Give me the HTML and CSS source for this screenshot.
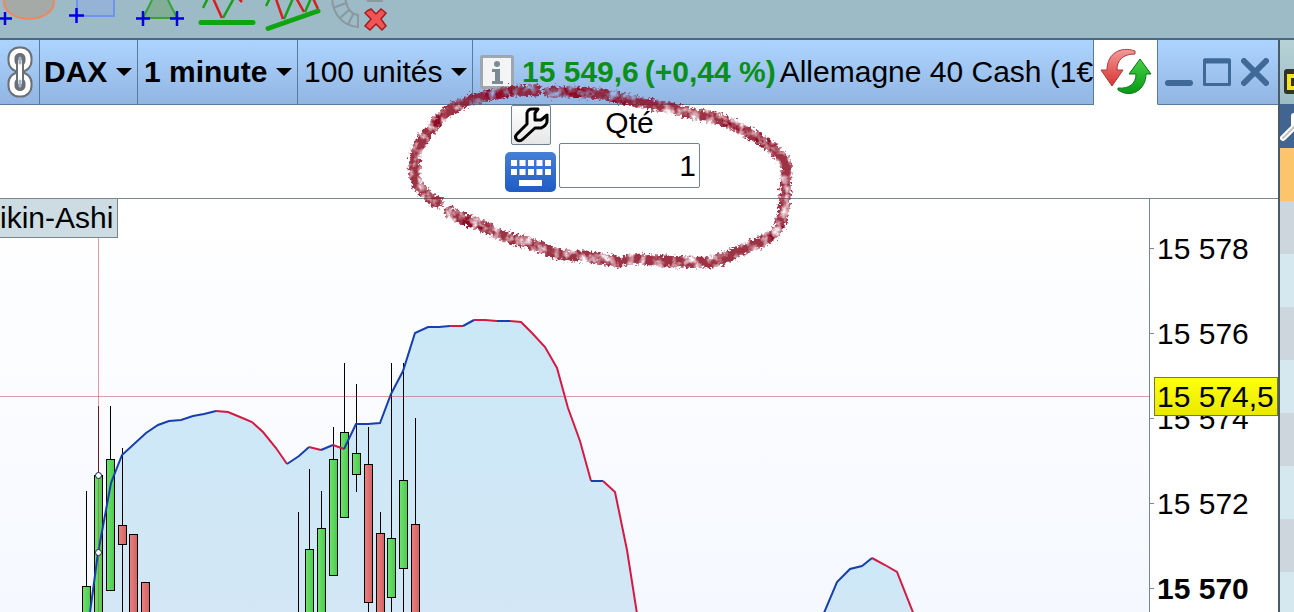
FILE: index.html
```html
<!DOCTYPE html>
<html lang="fr">
<head>
    <meta charset="UTF-8">
    <meta name="viewport" content="width=device-width, initial-scale=1.0">
    <title>DAX - 1 minute</title>
    <link rel="stylesheet" href="styles.css">
</head>
<body>
<div class="tools">
    <button class="tool" aria-label="Ellipse">
        <svg viewBox="0 0 58 38">
            <ellipse cx="29" cy="2" rx="25" ry="17" fill="#a6aaa6" stroke="#f0865c" stroke-width="2"/>
            <path d="M-2 18.500H12M5 12V25" stroke="#0000e0" stroke-width="2.500"/>
        </svg>
    </button>
    <button class="tool" aria-label="Rectangle">
        <svg viewBox="66 0 58 38">
            <rect x="77" y="-10" width="37" height="26" fill="#94b3d6" stroke="#6f94ee" stroke-width="2"/>
            <path d="M69 15.500H84M76.500 8V23" stroke="#0000e0" stroke-width="2.500"/>
        </svg>
    </button>
    <button class="tool" aria-label="Triangle">
        <svg viewBox="132 0 58 38">
            <path d="M143 18L160 -16L177 18Z" fill="#82ae97" stroke="#35a23a" stroke-width="2"/>
            <path d="M136 18.500H150M143 11V26M170 18.500H184M177 11V26" stroke="#0000e0" stroke-width="2.500"/>
        </svg>
    </button>
    <button class="tool" aria-label="Support horizontal">
        <svg viewBox="198 0 58 38" fill="none" stroke-width="2.500">
            <path d="M203 8L209 -4M223 18L234 -2" stroke="#16a016"/>
            <path d="M212 -4L222 18M237 -3L242 2" stroke="#d81e1e"/>
            <path d="M201 22.500H253" stroke="#10a510" stroke-width="5" stroke-linecap="round"/>
        </svg>
    </button>
    <button class="tool" aria-label="Support oblique">
        <svg viewBox="264 0 58 38" fill="none" stroke-width="2.500">
            <path d="M266 6L271 -4M284 19L294 -4M305 12L312 -4" stroke="#16a016"/>
            <path d="M275 -4L283 19M295 -4L304 12M312 -4L318 9" stroke="#d81e1e"/>
            <path d="M268 28.500L318 11" stroke="#10a510" stroke-width="5" stroke-linecap="round"/>
        </svg>
    </button>
    <button class="tool" aria-label="Supprimer les objets">
        <svg viewBox="330 0 58 38" fill="none" stroke="#8b989d" stroke-width="2">
            <path d="M332 -4C332 14 343 26 358 27V15C351 14 346 9 345 -4M333 8L346 3M339 19L349 10M348 25L353 14M367 1H383"/>
            <path d="M367 11L371 9L376 14L381 9L386 13L381 19L386 26L382 30L376 24L370 30L365 26L371 19L365 13Z" fill="#f05555" stroke="#a51c22" stroke-width="1.500"/>
        </svg>
    </button>
</div>

<div class="workspace">
    <main class="window">
        <header class="titlebar">
            <button class="cell link" aria-label="Lier les fenêtres">
                <svg width="26" height="52" viewBox="0 0 26 52" fill="none">
                    <rect x="5" y="5" width="16" height="17" rx="7" stroke="#6b7077" stroke-width="9"/>
                    <rect x="5" y="5" width="16" height="17" rx="7" stroke="#fff" stroke-width="5"/>
                    <rect x="5" y="30" width="16" height="17" rx="7" stroke="#6b7077" stroke-width="9"/>
                    <rect x="5" y="30" width="16" height="17" rx="7" stroke="#fff" stroke-width="5"/>
                    <path d="M13 11V41" stroke="#6b7077" stroke-width="8" stroke-linecap="round"/>
                    <path d="M13 14V38" stroke="#fff" stroke-width="4"/>
                    <path d="M13 12V17M13 35V40" stroke="#a4b4c8" stroke-width="3" stroke-linecap="round"/>
                </svg>
            </button>
            <div class="cell pick">
                <select class="bold" aria-label="Valeur"><option>DAX</option></select>
                <svg class="caret" viewBox="0 0 16 8"><path d="M0 0H16L8 8Z"/></svg>
            </div>
            <div class="cell pick">
                <select class="bold" aria-label="Unité de temps"><option>1 minute</option></select>
                <svg class="caret" viewBox="0 0 16 8"><path d="M0 0H16L8 8Z"/></svg>
            </div>
            <div class="cell pick">
                <select aria-label="Nombre d'unités"><option>100 unités</option></select>
                <svg class="caret" viewBox="0 0 16 8"><path d="M0 0H16L8 8Z"/></svg>
            </div>
            <div class="cell quote">
                <button class="info" aria-label="Informations">
                    <svg width="34" height="34" viewBox="0 0 34 34">
                        <rect x="1.500" y="1.500" width="31" height="31" rx="1" fill="#f4f4f4" stroke="#9da7ad" stroke-width="3"/>
                        <circle cx="17" cy="9" r="3" fill="#7b8b94"/>
                        <path d="M12 14H20V26H23V29H12V26H15V17H12Z" fill="#7b8b94"/>
                    </svg>
                </button>
                <span class="price">15 549,6</span>
                <span class="change">(+0,44 %)</span>
                <span class="name">Allemagne 40 Cash (1€</span>
            </div>
            <button class="cell refresh" aria-label="Actualiser">
                <svg width="52" height="48" viewBox="0 0 52 48">
                    <defs>
                        <linearGradient id="red" x2="0" y2="1"><stop stop-color="#f39a9a"/><stop offset="1" stop-color="#d8322f"/></linearGradient>
                        <linearGradient id="green" x2="0" y2="1"><stop stop-color="#45d045"/><stop offset="1" stop-color="#079a14"/></linearGradient>
                    </defs>
                    <path d="M35 3C21 -2 7 5 7 22H1L12 38L23 22H17C17 12 23 6 35 6Z" fill="url(#red)" stroke="#a83b3b"/>
                    <path d="M18 42C31 51 46 42 46 26H51L40 11L29 26H36C36 36 29 41 18 40Z" fill="url(#green)" stroke="#12711d"/>
                </svg>
            </button>
            <div class="cell controls">
                <button aria-label="Réduire"><svg viewBox="0 0 28 28"><path d="M3 25H25" stroke-width="6" stroke-linecap="round"/></svg></button>
                <button aria-label="Agrandir"><svg viewBox="0 0 28 28"><path d="M1.500 2H26.500V26.500H1.500Z" stroke-width="3" stroke-linejoin="round"/><path d="M1 3H27" stroke-width="5"/></svg></button>
                <button aria-label="Fermer"><svg viewBox="0 0 28 28"><path d="M3 3L25 25M25 3L3 25" stroke-width="6" stroke-linecap="round"/></svg></button>
            </div>
        </header>

        <section class="order">
            <div class="order-tools">
                <button class="settings" aria-label="Réglages">
                    <svg width="38" height="38" viewBox="0 0 38 38" fill="none" stroke="#000" stroke-width="3" stroke-linejoin="round">
                        <path d="M15 7Q16 3 20 3H26L23 7V14H29L35 9V16Q34 20 29 22H23L11 33Q8 36 5 34Q2 31 5 28L15 18Z"/>
                    </svg>
                </button>
                <button class="keyboard" aria-label="Clavier">
                    <svg width="51" height="40" viewBox="0 0 51 40">
                        <path d="M9 8V24M17.500 8V24M26 8V24M34.500 8V24M43 8V24" stroke="#fff" stroke-width="6" stroke-dasharray="6 3"/>
                        <rect x="14" y="28" width="23" height="6" fill="#fff"/>
                    </svg>
                </button>
            </div>
            <div class="qty">
                <label for="qty">Qté</label>
                <input id="qty" type="text" value="1">
            </div>
        </section>

        <section class="chart">
            <div class="plot">
                <span class="indicator">ikin-Ashi</span>
                <svg class="curves" viewBox="0 199 1149 413" preserveAspectRatio="xMinYMin slice">
                    <defs>
                        <linearGradient id="area" x2="0" y2="1"><stop stop-color="#cbe8f7"/><stop offset="1" stop-color="#d3e7f6"/></linearGradient>
                        <linearGradient id="up"><stop stop-color="#6fe36f"/><stop offset="1" stop-color="#4ccb4c"/></linearGradient>
                        <linearGradient id="down"><stop stop-color="#ed8080"/><stop offset="1" stop-color="#cf6464"/></linearGradient>
                    </defs>
                </svg>
            </div>
            <div class="axis">
                <ol>
                    <li>15 578</li>
                    <li>15 576</li>
                    <li>15 574</li>
                    <li>15 572</li>
                    <li class="bold">15 570</li>
                </ol>
                <span class="tag">15 574,5</span>
            </div>
        </section>
    </main>

    <aside class="side">
        <div class="side-head">
            <svg width="14" height="64" viewBox="0 0 14 64"><rect x="4" y="29" width="30" height="25" rx="3" fill="#33332c"/><path d="M16 36H9V48H16" fill="none" stroke="#f7e51c" stroke-width="4"/></svg>
        </div>
        <div class="side-tool">
            <svg width="14" height="44" viewBox="0 0 14 44" fill="none" stroke-linecap="round"><path d="M3 34L14 23M14 12V22" stroke="#fff" stroke-width="6"/><path d="M3 34L15 22" stroke="#c5c5c5" stroke-width="2"/></svg>
        </div>
        <div class="side-current"></div>
        <div class="side-rows"></div>
    </aside>
</div>

<svg class="marker" width="400" height="200" viewBox="400 80 400 200" fill="none" stroke-linecap="round" aria-hidden="true">
    <defs>
        <filter id="chalk" x="-10%" y="-10%" width="120%" height="120%">
            <feTurbulence type="fractalNoise" baseFrequency="0.35" numOctaves="2" seed="4" result="noise"/>
            <feDisplacementMap in="SourceGraphic" in2="noise" scale="9" xChannelSelector="R" yChannelSelector="G" result="rough"/>
            <feTurbulence type="fractalNoise" baseFrequency="0.11" numOctaves="3" seed="9"/>
            <feColorMatrix values="0 0 0 0 0  0 0 0 0 0  0 0 0 0 0  0 0 0 2.6 -0.5" result="grain"/>
            <feComposite in="rough" in2="grain" operator="in"/>
            <feGaussianBlur stdDeviation="0.5"/>
        </filter>
    </defs>
    <g filter="url(#chalk)" stroke="#8d0825">
        <path stroke-width="11" stroke-opacity=".85" d="M536 90C518 91 506 91 496 94C480 96 465 102 453 108C444 113 436 122 430 131C421 140 415 148 415 158C413 172 415 184 422 190C428 195 430 201 438 202M449 212C460 219 475 222 487 228C499 236 511 239 523 241C532 243 541 248 550 251C562 257 574 256 585 256C596 257 607 261 618 262M628 260C645 257 656 262 670 261C684 263 698 262 712 262C724 259 736 252 748 247C760 242 770 239 776 232C783 222 784 210 785 197C785 186 786 175 787 164C782 158 778 152 771 147C759 138 744 130 729 123C719 117 708 116 699 115C685 112 672 108 658 106C643 103 630 100 616 97C594 91 570 92 549 92"/>
        <path stroke-width="9" d="M489 94L508 93M566 93L588 94M612 98L624 100M728 123L738 127M758 139L768 145M435 122L441 118M773 234L779 229M785 193V185M468 222L480 226"/>
    </g>
</svg>

<script>
const svg = document.querySelector(".curves");

function add(tag, attrs) {
    const el = document.createElementNS("http://www.w3.org/2000/svg", tag);
    for (const key in attrs) el.setAttribute(key, attrs[key]);
    svg.appendChild(el);
}

// b: hausse, r: baisse, chaque tronçon repart du dernier point
const curves = [
    [
        ["b", "89,620 98,553 111,483 122,455 146,433 158,425 169,421 181,420 193,416 204,414 216,411"],
        ["r", "228,412 240,417 252,422 263,432 276,448 287,464"],
        ["b", "299,456 309,447"], ["r", "321,450"], ["b", "333,445"], ["r", "344,449"],
        ["b", "356,424 368,424 380,423 391,394 403,371 415,333 428,327 439,327 450,326"],
        ["r", "463,326"], ["b", "474,320"], ["r", "485,320 497,321"], ["b", "510,321"],
        ["r", "521,322 532,333 545,347 557,368 568,408 580,441 591,481"],
        ["b", "603,481"], ["r", "615,492 627,550 638,620"]
    ],
    [
        ["b", "821,620 837,582 850,569 862,566 872,558"],
        ["r", "885,565 897,572 916,620"]
    ]
];

// x, haut de mèche, haut du corps, bas du corps, bas de mèche, sens
const candles = [
    [86, 491, 586, 630, 630, "up"],
    [98, 406, 475, 630, 630, "up"],
    [110, 406, 459, 590, 590, "up"],
    [122, 448, 525, 544, 630, "down"],
    [133, 534, 534, 630, 630, "down"],
    [145, 582, 582, 630, 630, "down"],
    [298, 512, 630, 630, 630, "up"],
    [309, 469, 549, 630, 630, "up"],
    [321, 491, 528, 630, 630, "up"],
    [333, 427, 459, 575, 575, "up"],
    [344, 363, 432, 517, 517, "up"],
    [356, 384, 453, 474, 492, "up"],
    [368, 427, 464, 602, 630, "down"],
    [380, 512, 533, 630, 630, "down"],
    [391, 363, 538, 597, 630, "up"],
    [403, 363, 480, 568, 630, "up"],
    [415, 418, 524, 630, 630, "down"]
];

curves.forEach(curve => {
    add("polygon", {points: curve.map(part => part[1]).join(" "), fill: "url(#area)"});
});

candles.forEach(([x, high, top, bottom, low, way]) => {
    add("path", {d: `M${x + .5} ${high}V${low}`, stroke: "#000"});
    add("rect", {x: x - 3.5, y: top + .5, width: 8, height: bottom - top, fill: `url(#${way})`, stroke: "#000"});
});

curves.forEach(curve => {
    let last = "";
    curve.forEach(([color, points]) => {
        add("polyline", {points: last + " " + points, fill: "none", stroke: color === "b" ? "#173fae" : "#d41a43", "stroke-width": 2});
        last = points.split(" ").pop();
    });
});

// curseur
add("path", {d: "M0 396.5H4000M98.5 199V612", stroke: "#c43c4c", "stroke-opacity": .5});
[475, 552].forEach(y => add("circle", {cx: 98.5, cy: y + .5, r: 3, fill: "#fff", stroke: "#124"}));
</script>
</body>
</html>
```
FILE: styles.css
```css
* {
    box-sizing: border-box;
}

body {
    margin: 0;
    height: 100vh;
    display: flex;
    flex-direction: column;
    overflow: hidden;
    background: #fff;
    color: #000;
    font: 30px/36px "Liberation Sans", Arial, sans-serif;
}

button,
select,
input {
    margin: 0;
    padding: 0;
    border: 0;
    background: none;
    color: inherit;
    font: inherit;
}

svg {
    display: block;
}

.bold {
    font-weight: bold;
}

/* barre d'outils */
.tools {
    flex: none;
    display: flex;
    gap: 8px;
    height: 40px;
    background: #9cbbc7;
    border-bottom: 2px solid #47697f;
    overflow: hidden;
}

.tool {
    flex: none;
    width: 58px;
    height: 38px;
}

.workspace {
    flex: 1;
    min-height: 0;
    display: flex;
}

.window {
    flex: 1;
    min-width: 0;
    display: flex;
    flex-direction: column;
}

/* barre de titre */
.titlebar {
    flex: none;
    display: flex;
    height: 65px;
}

.cell {
    flex: none;
    display: flex;
    align-items: center;
    background: linear-gradient(#add4ff, #92b5e2);
    border-right: 1px solid #587a9c;
    border-bottom: 1px solid #587a9c;
}

.link {
    width: 40px;
    justify-content: center;
}

.pick {
    gap: 8px;
    padding: 0 5px 0 4px;
}

.pick:nth-child(n+3) {
    padding-left: 6px;
}

.pick select {
    appearance: none;
    height: 40px;
}

.caret {
    width: 16px;
    height: 8px;
    pointer-events: none;
}

.quote {
    flex: 1;
    min-width: 0;
    padding-left: 7px;
    overflow: hidden;
    white-space: nowrap;
}

.quote > * {
    flex: none;
}

.price {
    margin-left: 8px;
}

.price,
.change {
    color: #0a8f18;
    font-weight: bold;
}

.change {
    margin: 0 4px 0 6px;
}

.refresh {
    width: 64px;
    justify-content: center;
    background: #fff;
    border-bottom-color: #fff;
}

.controls {
    gap: 10px;
    padding: 0 9px 0 7px;
    border-right: 0;
}

.controls svg {
    width: 28px;
    height: 28px;
    fill: none;
    stroke: #416998;
}

/* panneau d'ordre */
.order {
    flex: none;
    display: flex;
    gap: 3px;
    height: 94px;
    padding-left: 505px;
    border-bottom: 1px solid #78868e;
}

.order-tools {
    display: flex;
    flex-direction: column;
    align-items: center;
    gap: 7px;
}

.settings {
    width: 40px;
    height: 40px;
    border: 1px solid #6f8291;
    border-radius: 2px;
    background: linear-gradient(#fff, #e6e6e6);
}

.keyboard {
    width: 51px;
    height: 40px;
    border-radius: 5px;
    background: linear-gradient(#477fd6, #1f5cc4);
}

.qty {
    display: flex;
    flex-direction: column;
    text-align: center;
}

.qty label {
    height: 38px;
}

.qty input {
    width: 141px;
    height: 45px;
    padding: 0 3px;
    border: 1px solid #6f8291;
    border-radius: 2px;
    background: #fff;
    text-align: right;
}

/* graphique */
.chart {
    flex: 1;
    min-height: 0;
    display: flex;
}

.plot {
    position: relative;
    flex: 1;
    min-width: 0;
    overflow: hidden;
    background: linear-gradient(#fff, #f5f8ff);
    border-right: 1px solid #78868e;
}

.indicator {
    position: absolute;
    left: 0;
    top: 0;
    height: 39px;
    padding-right: 4px;
    line-height: 38px;
    background: #cddce3;
    border: solid #78868e;
    border-width: 0 1px 1px 0;
}

.curves {
    width: 100%;
    height: 100%;
}

.axis {
    position: relative;
    flex: none;
    width: 128px;
    overflow: hidden;
}

.axis ol {
    margin: 0;
    padding: 7px 0 0;
    list-style: none;
}

.axis li {
    display: flex;
    align-items: center;
    gap: 3px;
    height: 85px;
}

.axis li::before {
    content: "";
    width: 4px;
    height: 1px;
    background: #78868e;
}

/* prix sous le curseur */
.tag {
    position: absolute;
    left: 4px;
    right: 0;
    top: 178px;
    height: 39px;
    padding-left: 2px;
    line-height: 38px;
    background: linear-gradient(#ffff10, #e9e900);
    border: 1px solid #77773a;
}

/* fenêtre voisine */
.side {
    flex: none;
    display: flex;
    flex-direction: column;
    width: 16px;
    overflow: hidden;
    border-left: 2px solid #485b66;
}

.side-head {
    height: 64px;
    background: linear-gradient(#b6d2d6, #9dbdc5);
}

.side-tool {
    height: 44px;
    background: #416590;
}

.side-current {
    height: 53px;
    background: #fcc56c;
}

.side-rows {
    flex: 1;
    background: repeating-linear-gradient(#ced6dd 0 53px, #d5e7ef 53px 106px);
}

/* cercle tracé à la main au-dessus du panneau */
.marker {
    position: absolute;
    left: 400px;
    top: 80px;
    pointer-events: none;
}
```
